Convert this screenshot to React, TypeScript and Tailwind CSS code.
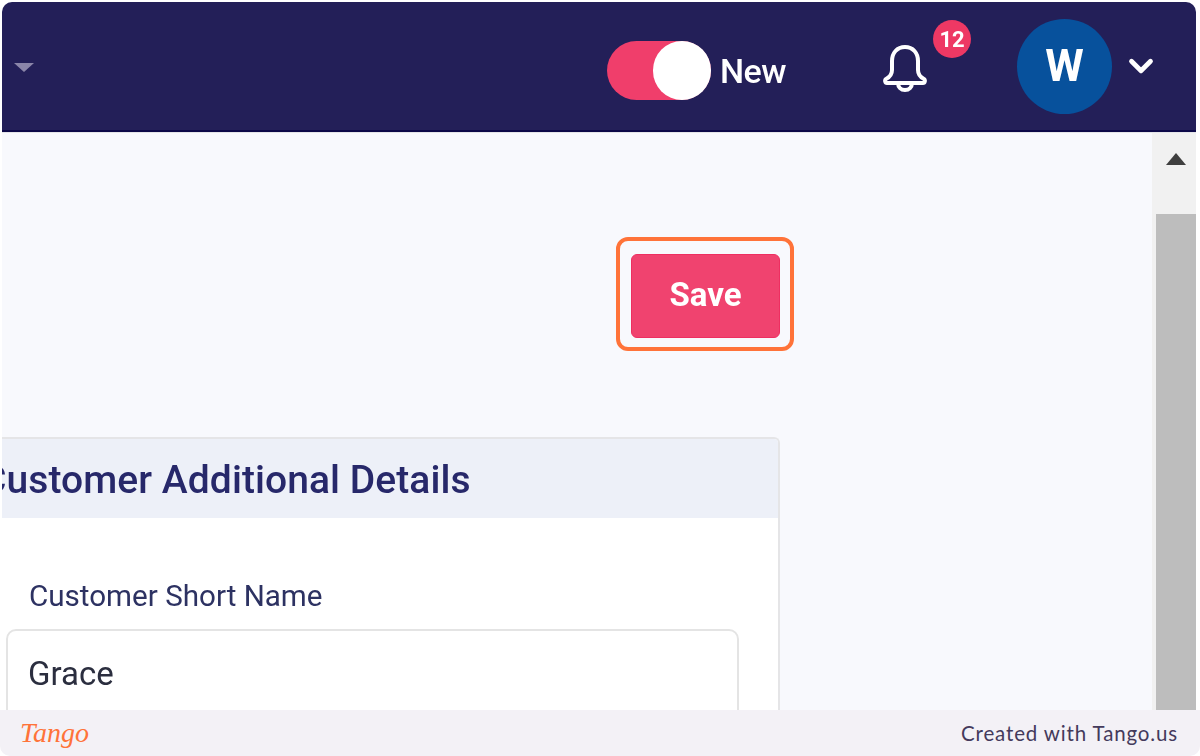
import { ChevronDown } from "lucide-react";

function BellIcon() {
  return (
    <svg viewBox="0 0 44 48" className="h-[48px] w-[44px] text-white" fill="none" stroke="currentColor" strokeWidth="4" strokeLinejoin="round" strokeLinecap="round">
      <path d="M22 3c-8 0-13 6-13 14v9c0 4-2 7-6 9-1.500 1-1 4 1 4h36c2 0 2.500-3 1-4-4-2-6-5-6-9v-9c0-8-5-14-13-14Z" />
      <path d="M15 39c0 4 3 7 7 7s7-3 7-7" />
    </svg>
  );
}

export default function App() {
  return (
    <div className="flex h-[756px] w-[1200px] flex-col overflow-hidden bg-white font-['Roboto',sans-serif]">
      <div className="flex min-h-0 flex-1 flex-col pl-[2px] pr-[4px] pt-[2px]">
        <header className="flex h-[130px] shrink-0 items-center rounded-t-[10px] border-b-[2px] border-[#0c0848] bg-[#231f58] pl-[12px]">
          <div className="mt-[2px] h-0 w-0 border-x-[10px] border-t-[9px] border-x-transparent border-t-[#8b86a9] blur-[0.6px]" />
          <div className="ml-auto flex items-center">
            <div className="mt-[8px] flex h-[59px] w-[104px] items-center justify-end rounded-full bg-[#f03e6b] blur-[0.5px]">
              <div className="h-[59px] w-[58px] rounded-full bg-white" />
            </div>
            <span className="ml-[9px] mt-[10px] text-[34px] font-medium leading-none tracking-[-0.5px] text-white blur-[0.5px]">New</span>
            <div className="relative ml-[97px] mt-[4px] h-[48px] w-[44px] blur-[0.4px]">
              <BellIcon />
              <span className="absolute left-[50px] top-[-24px] flex h-[38px] w-[38px] items-center justify-center rounded-full bg-[#ee3864] text-[22px] font-bold text-white">
                12
              </span>
            </div>
            <div className="ml-[90px] flex h-[95px] w-[95px] items-center justify-center rounded-full bg-[#07519c] text-[44px] font-bold text-white blur-[0.5px]">
              W
            </div>
            <ChevronDown className="ml-[10px] h-[38px] w-[38px] text-white" strokeWidth={3} />
            <div className="w-[36px]" />
          </div>
        </header>
        <div className="flex min-h-0 flex-1 border-t border-[#e4e4e8]">
          <main className="flex min-w-0 flex-1 flex-col bg-[#f8f9fd]">
            <div className="ml-[614px] mt-[104px] w-[178px] rounded-[12px] border-[4px] border-[#ff7339] pb-[9px] pl-[11px] pr-[10px] pt-[13px]">
              <button className="flex h-[84px] w-[149px] items-center justify-center rounded-[6px] border border-[#ee2f61] bg-[#f0436f] pb-[4px] text-[33px] font-bold leading-none text-white blur-[0.4px]">
                Save
              </button>
            </div>
            <section className="mt-[86px] min-h-0 w-[778px] flex-1 overflow-hidden rounded-tr-[6px] border-r-[2px] border-t-[2px] border-[#e5e5e7] bg-white">
              <div className="flex h-[79px] items-center overflow-hidden bg-[#edf0f8]">
                <h2 className="ml-[-21px] mt-[4px] whitespace-nowrap text-[39px] font-medium tracking-[0.07px] text-[#27286a] blur-[0.4px]">
                  Customer Additional Details
                </h2>
              </div>
              <div className="px-[4px] pt-[60px]">
                <label className="ml-[23px] block text-[29.6px] leading-[36px] text-[#2d3262] blur-[0.4px]">Customer Short Name</label>
                <div className="mt-[15px] h-[120px] w-[733px] rounded-[10px] border-[2px] border-[#e4e4e4] pl-[20px] pt-[23px] text-[33px] leading-[40px] text-[#2b2e3f]">
                  <span className="blur-[0.4px]">Grace</span>
                </div>
              </div>
            </section>
          </main>
          <aside className="flex w-[44px] shrink-0 flex-col items-end bg-[#f1f1f1]">
            <div className="flex h-[81px] w-full justify-center pt-[20px]">
              <div className="ml-[4px] h-0 w-0 border-x-[10px] border-b-[12px] border-x-transparent border-b-[#3f3f3f]" />
            </div>
            <div className="w-[40px] flex-1 bg-[#bdbdbd]" />
          </aside>
        </div>
      </div>
      <footer className="flex h-[46px] shrink-0 items-center justify-between rounded-b-[10px] bg-[#f3f1f6] pl-[20px] pr-[22px]">
        <span className="font-['Liberation_Serif',serif] text-[28px] font-normal italic leading-none text-[#ff7339]">
          Tango
        </span>
        <span className="font-['Lato',sans-serif] text-[20.5px] tracking-[0.85px] text-[#443a5c]">Created with Tango.us</span>
      </footer>
    </div>
  );
}
